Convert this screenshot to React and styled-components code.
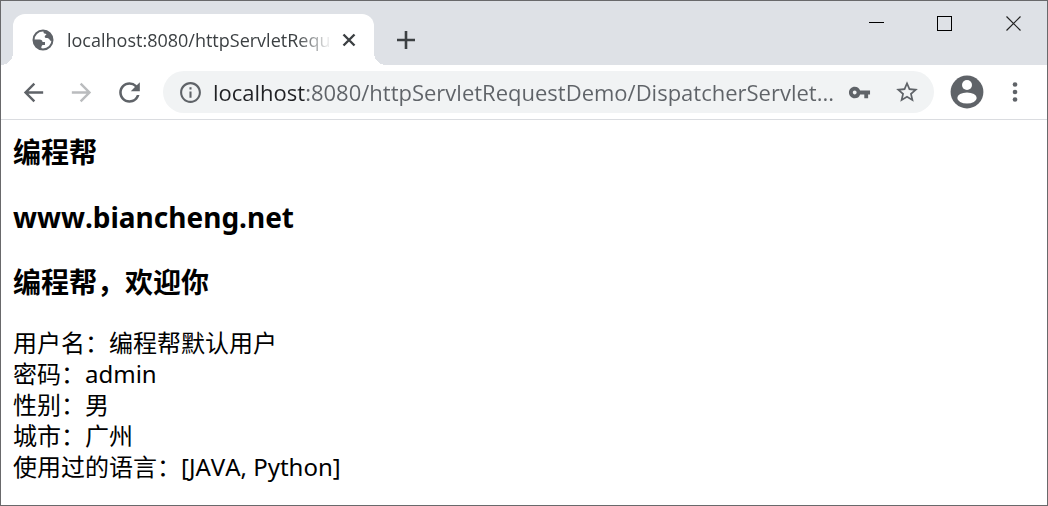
import styled, { createGlobalStyle } from 'styled-components';
import {
  MdArrowBack,
  MdArrowForward,
  MdRefresh,
  MdInfoOutline,
  MdVpnKey,
  MdStarBorder,
} from 'react-icons/md';

const GlobalStyle = createGlobalStyle`
  * {
    box-sizing: border-box;
  }

  body {
    margin: 0;
    font-family: 'Noto Sans', 'Noto Sans CJK SC', sans-serif;
    font-kerning: none;
    color: #000;
    background: #fff;
  }
`;

// WINDOW
const Window = styled.div`
  display: flex;
  flex-direction: column;
  min-height: 100vh;
  border: 1px solid #69696b;
  background: #fff;
`;

const TabStrip = styled.header`
  display: flex;
  align-items: flex-end;
  height: 64px;
  padding-left: 12px;
  background: #dee1e6;
`;

const Tab = styled.div`
  position: relative;
  display: flex;
  align-items: center;
  width: 361px;
  height: 51px;
  padding: 0 16px 0 18px;
  border-radius: 12px 12px 0 0;
  background: #fff;

  // curved feet that join the tab to the toolbar
  &::before,
  &::after {
    content: '';
    position: absolute;
    bottom: 0;
    width: 12px;
    height: 12px;
  }

  &::before {
    right: 100%;
    background: radial-gradient(circle at 0 0, transparent 12px, #fff 12px);
  }

  &::after {
    left: 100%;
    background: radial-gradient(circle at 100% 0, transparent 12px, #fff 12px);
  }
`;

const TabTitle = styled.span`
  flex: 1;
  margin: 0 8px 0 12px;
  overflow: hidden;
  white-space: nowrap;
  font-family: 'Open Sans', 'Noto Sans CJK SC', sans-serif;
  font-size: 18px;
  line-height: 28px;
  color: #3c4043;
  mask-image: linear-gradient(to left, transparent, #000 36px);
`;

const IconButton = styled.button`
  display: flex;
  align-items: center;
  justify-content: center;
  flex: none;
  width: ${({ $width }) => $width}px;
  height: ${({ $height }) => $height || 32}px;
  padding: 0;
  border: 0;
  background: none;
  color: ${({ $color }) => $color || '#5f6368'};
`;

const WindowControls = styled.div`
  display: flex;
  align-self: flex-start;
  margin-left: auto;
`;

// TOOLBAR
const Toolbar = styled.nav`
  display: flex;
  align-items: center;
  height: 55px;
  padding: 0 6px 0 8px;
  border-bottom: 1px solid #dadce0;
`;

const AddressBar = styled.form`
  display: flex;
  align-items: center;
  flex: 1;
  min-width: 0;
  height: 42px;
  margin: 0 11px 0 10px;
  padding: 0 3px 0 8px;
  border-radius: 21px;
  background: #f1f3f4;
`;

const AddressInput = styled.input`
  flex: 1;
  min-width: 0;
  height: 32px;
  margin-left: 4px;
  padding: 0;
  border: 0;
  outline: 0;
  font-family: 'Open Sans', 'Noto Sans CJK SC', sans-serif;
  font-size: 22px;
  text-overflow: ellipsis;
  // host part is darker than the rest of the address
  color: transparent;
  background: linear-gradient(to right, #202124 92px, #5f6368 92px);
  background-clip: text;
  caret-color: #202124;
`;

// PAGE
const Page = styled.main`
  padding: 14px 12px;
`;

const Headings = styled.div`
  display: grid;
  gap: 28px;
  margin-bottom: 26px;
`;

const Heading = styled.h3`
  margin: 0;
  font-size: 28px;
  font-weight: 700;
  line-height: 37px;
`;

const Details = styled.div`
  font-size: 24px;
  line-height: 31px;
`;

const GlobeIcon = () => (
  <svg width="24" height="24" viewBox="0 0 24 24" fill="none" aria-hidden="true">
    <circle cx="12" cy="12" r="9.5" stroke="#5f6368" strokeWidth="2" />
    <path fill="#5f6368" d="M13 2c5 1 8.500 5 8.500 10c-1 1.500-2.500 1-3-.5c-.5-1-1.500-1.500-3-1.500c-2.500 0-2-2.500-.5-3c1-.5 0-1.500-1.500-1.500c-1 0-1.500-2-.5-3.500zM2.500 11.500h6c2 0 3 1 3 2.500h2.500v3h-2.500c-1 1-1.500 2-1 4.500c-4.500-.5-8-5-8-10z" />
  </svg>
);

const AvatarIcon = () => (
  <svg width="34" height="34" viewBox="0 0 34 34" aria-hidden="true">
    <circle cx="17" cy="17" r="16.400" fill="#5f6368" />
    <circle cx="17" cy="10" r="5" fill="#fff" />
    <ellipse cx="17" cy="23" rx="9.700" ry="5.500" fill="#fff" />
  </svg>
);

const MenuIcon = () => (
  <svg width="6" height="20" viewBox="0 0 6 20" fill="#5f6368" aria-hidden="true">
    <circle cx="3" cy="2.500" r="2.300" />
    <circle cx="3" cy="10" r="2.300" />
    <circle cx="3" cy="17.500" r="2.300" />
  </svg>
);

const StrokeIcon = ({ size, d, width = 1, crisp }) => (
  <svg
    width={size}
    height={size}
    viewBox={`0 0 ${size} ${size}`}
    fill="none"
    stroke="currentColor"
    strokeWidth={width}
    shapeRendering={crisp ? 'crispEdges' : 'auto'}
    aria-hidden="true"
  >
    <path d={d} />
  </svg>
);

const HEADINGS = ['编程帮', 'www.biancheng.net', '编程帮，欢迎你'];

const DETAILS = [
  '用户名：编程帮默认用户',
  '密码：admin',
  '性别：男',
  '城市：广州',
  '使用过的语言：[JAVA, Python]',
];

const App = () => (
  <>
    <GlobalStyle />
    <Window lang="zh-CN">
      <TabStrip>
        <Tab>
          <GlobeIcon />
          <TabTitle>localhost:8080/httpServletRequ</TabTitle>
          <IconButton $width={18} $color="#3c4043" aria-label="Close tab">
            <StrokeIcon size={14} width={2.4} d="M1.500 1.500l11 11M12.500 1.500l-11 11" />
          </IconButton>
        </Tab>
        <IconButton $width={64} $height={51} $color="#3c4043" aria-label="New tab">
          <StrokeIcon size={18} width={2.6} d="M9 0v18M0 9h18" />
        </IconButton>
        <WindowControls>
          <IconButton $width={68} $height={45} $color="#000" aria-label="Minimize">
            <StrokeIcon size={15} crisp d="M0 6.500h15" />
          </IconButton>
          <IconButton $width={69} $height={45} $color="#000" aria-label="Maximize">
            <StrokeIcon size={15} crisp d="M.5.5h14v14h-14z" />
          </IconButton>
          <IconButton $width={68} $height={45} $color="#222" aria-label="Close">
            <StrokeIcon size={15} width={1.2} d="M.5.5l14 14M14.500.5l-14 14" />
          </IconButton>
        </WindowControls>
      </TabStrip>
      <Toolbar>
        <IconButton $width={48} aria-label="Back">
          <MdArrowBack size={29} />
        </IconButton>
        <IconButton $width={48} $color="#babcbe" aria-label="Forward">
          <MdArrowForward size={29} />
        </IconButton>
        <IconButton $width={48} aria-label="Reload">
          <MdRefresh size={31} />
        </IconButton>
        <AddressBar onSubmit={(e) => e.preventDefault()}>
          <IconButton type="button" $width={38} aria-label="Site information">
            <MdInfoOutline size={25} />
          </IconButton>
          <AddressInput
            aria-label="Address"
            spellCheck={false}
            defaultValue="localhost:8080/httpServletRequestDemo/DispatcherServlet..."
          />
          <IconButton type="button" $width={48} aria-label="Passwords">
            <MdVpnKey size={23} />
          </IconButton>
          <IconButton type="button" $width={48} aria-label="Bookmark">
            <MdStarBorder size={26} />
          </IconButton>
        </AddressBar>
        <IconButton $width={44} $height={42} aria-label="Profile">
          <AvatarIcon />
        </IconButton>
        <IconButton $width={52} aria-label="Menu">
          <MenuIcon />
        </IconButton>
      </Toolbar>
      <Page>
        <Headings>
          {HEADINGS.map((text) => (
            <Heading key={text}>{text}</Heading>
          ))}
        </Headings>
        <Details>
          {DETAILS.map((text) => (
            <div key={text}>{text}</div>
          ))}
        </Details>
      </Page>
    </Window>
  </>
);

export default App;
